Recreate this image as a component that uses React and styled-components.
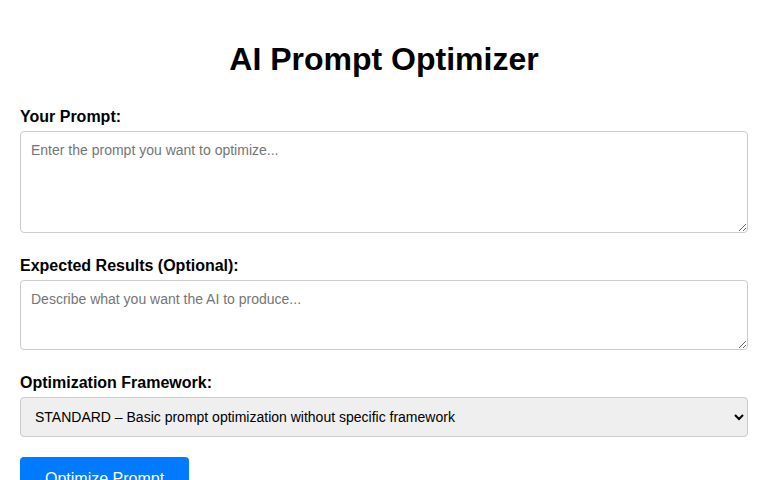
import React, { useState } from 'react';
import styled, { createGlobalStyle } from 'styled-components';

const GlobalStyle = createGlobalStyle`
    body {
        margin: 0;
        background: #fff;
        font-family: "Liberation Sans", Arial, sans-serif;
        color: #000;
    }
`

const frameworks = [
    { value: 'STANDARD', label: 'STANDARD – Basic prompt optimization without specific framework' },
    { value: 'RACE', label: 'RACE – Role, Action, Context, Expectation' },
    { value: 'CARE', label: 'CARE – Context, Action, Result, Example' },
    { value: 'APE', label: 'APE – Action, Purpose, Expectation' },
]

function App() {
    const [prompt, setPrompt] = useState('');
    const [expected, setExpected] = useState('');
    const [framework, setFramework] = useState('STANDARD');

    return (
        <Container>
            <GlobalStyle />
            <Title>AI Prompt Optimizer</Title>
            <Group>
                <Label htmlFor="prompt">Your Prompt:</Label>
                <TextArea
                    id="prompt"
                    $height={102}
                    placeholder="Enter the prompt you want to optimize..."
                    value={prompt}
                    onChange={(e) => setPrompt(e.target.value)}
                />
            </Group>
            <Group>
                <Label htmlFor="expected">Expected Results (Optional):</Label>
                <TextArea
                    id="expected"
                    $height={70}
                    placeholder="Describe what you want the AI to produce..."
                    value={expected}
                    onChange={(e) => setExpected(e.target.value)}
                />
            </Group>
            <Group>
                <Label htmlFor="framework">Optimization Framework:</Label>
                <Select
                    id="framework"
                    value={framework}
                    onChange={(e) => setFramework(e.target.value)}
                >
                    {frameworks.map((f) => (
                        <option key={f.value} value={f.value}>{f.label}</option>
                    ))}
                </Select>
            </Group>
            <Button type="button">Optimize Prompt</Button>
        </Container>
    )
}

const Container = styled.div`
    padding: 20px;
    max-width: 800px;
    margin: 0 auto;
`

const Title = styled.h1`
    text-align: center;
    font-size: 32px;
    font-weight: bold;
    margin: 21px 0 30px;
    line-height: 37px;
`

const Group = styled.div`
    margin-bottom: 24px;
`

const Label = styled.label`
    display: block;
    font-weight: bold;
    font-size: 16px;
    line-height: 18px;
    margin-bottom: 5px;
`

const TextArea = styled.textarea`
    display: block;
    box-sizing: border-box;
    width: 100%;
    height: ${(p) => p.$height}px;
    padding: 10px;
    border: 1px solid #ccc;
    border-radius: 4px;
    font-family: "Liberation Sans", Arial, sans-serif;
    font-size: 14px;
    color: #333;

    &::placeholder {
        color: #757575;
    }
`

const Select = styled.select`
    display: block;
    box-sizing: border-box;
    width: 100%;
    height: 40px;
    padding: 10px;
    border: 1px solid #ccc;
    border-radius: 4px;
    background-color: #efefef;
    font-family: "Liberation Sans", Arial, sans-serif;
    font-size: 14px;
    color: #000;
`

const Button = styled.button`
    margin-top: -4px;
    padding: 13px 25px 11px;
    background-color: #007bff;
    color: #fff;
    border: none;
    border-radius: 4px;
    font-family: "Liberation Sans", Arial, sans-serif;
    font-size: 16px;
    cursor: pointer;
`

export default App
